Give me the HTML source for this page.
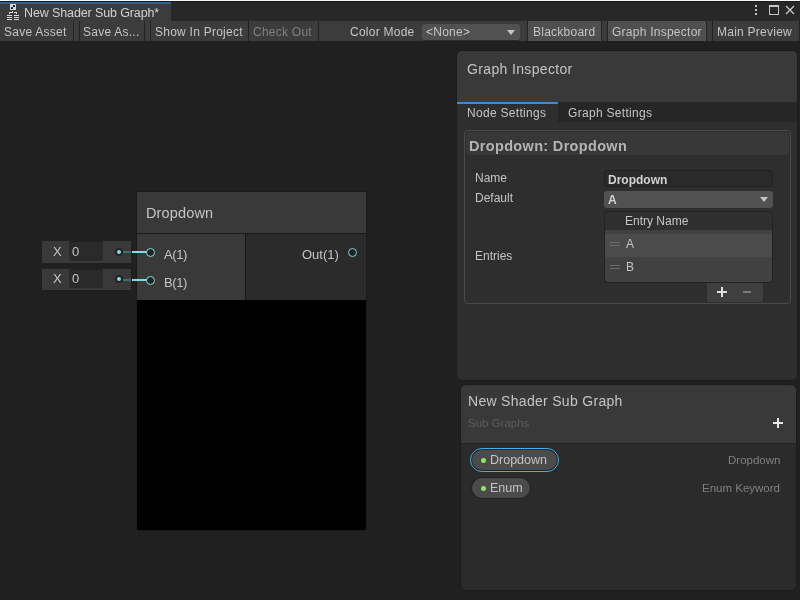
<!DOCTYPE html>
<html><head><meta charset="utf-8">
<style>
*{margin:0;padding:0;box-sizing:border-box}
html,body{width:800px;height:600px;overflow:hidden;background:#202020;font-family:"Liberation Sans",sans-serif;color:#c4c4c4}
.a{position:absolute}
.t{position:absolute;white-space:nowrap;font-size:12px;line-height:14px;will-change:transform}
.tb{letter-spacing:0.25px}
</style></head><body>
<!-- top strip -->
<div class="a" style="left:0;top:0;width:800px;height:1px;background:#f5f5f5"></div>
<div class="a" style="left:0;top:1px;width:800px;height:20px;background:#282828"></div>
<div class="a" style="left:0;top:1px;width:800px;height:1px;background:#1a1a1a"></div>
<!-- tab -->
<div class="a" style="left:0;top:2px;width:171px;height:19px;background:#3c3c3c"></div>
<div class="a" style="left:0;top:2px;width:171px;height:2px;background:#2c629c"></div>
<div class="t" style="left:24px;top:6px;font-size:12.5px;letter-spacing:-0.12px;color:#d2d2d2">New Shader Sub Graph*</div>
<!-- toolbar -->
<div class="a" style="left:0;top:21px;width:800px;height:20px;background:#3c3c3c"></div>
<div class="a" style="left:144px;top:21px;width:1px;height:20px;background:#232323"></div>
<div class="a" style="left:150px;top:21px;width:1px;height:20px;background:#232323"></div>
<div class="a" style="left:73px;top:21px;width:1px;height:20px;background:#232323"></div>
<div class="a" style="left:79px;top:21px;width:1px;height:20px;background:#232323"></div>
<div class="a" style="left:248px;top:21px;width:1px;height:20px;background:#232323"></div>
<div class="a" style="left:318px;top:21px;width:1px;height:20px;background:#232323"></div>
<div class="t tb" style="left:4px;top:25px">Save Asset</div>
<div class="t tb" style="left:83px;top:25px">Save As...</div>
<div class="t tb" style="left:155px;top:25px">Show In Project</div>
<div class="t tb" style="left:253px;top:25px;color:#7f7f7f">Check Out</div>
<div class="t tb" style="left:350px;top:25px">Color Mode</div>
<div class="a" style="left:422px;top:24px;width:98px;height:17px;background:#515151;border-radius:3px;border-bottom:1px solid #2c2c2c"></div>
<div class="t tb" style="left:426px;top:25px">&lt;None&gt;</div>
<div class="a" style="left:507px;top:30px;width:0;height:0;border-left:4px solid transparent;border-right:4px solid transparent;border-top:5px solid #c4c4c4"></div>
<div class="a" style="left:527px;top:21px;width:1px;height:20px;background:#232323"></div>
<div class="a" style="left:528px;top:21px;width:73px;height:20px;background:#4f4f4f"></div>
<div class="a" style="left:601px;top:21px;width:1px;height:20px;background:#232323"></div>
<div class="a" style="left:607px;top:21px;width:1px;height:20px;background:#232323"></div>
<div class="a" style="left:608px;top:21px;width:98px;height:20px;background:#4f4f4f"></div>
<div class="a" style="left:706px;top:21px;width:1px;height:20px;background:#232323"></div>
<div class="a" style="left:712px;top:21px;width:1px;height:20px;background:#232323"></div>
<div class="a" style="left:799px;top:21px;width:1px;height:20px;background:#232323"></div>
<div class="t tb" style="left:533px;top:25px">Blackboard</div>
<div class="t tb" style="left:612px;top:25px">Graph Inspector</div>
<div class="t tb" style="left:717px;top:25px">Main Preview</div>
<!-- window icons -->
<div class="a" style="left:755px;top:5px;width:2px;height:2px;background:#c4c4c4"></div>
<div class="a" style="left:755px;top:9px;width:2px;height:2px;background:#c4c4c4"></div>
<div class="a" style="left:755px;top:13px;width:2px;height:2px;background:#c4c4c4"></div>
<div class="a" style="left:769px;top:5px;width:10px;height:10px;border:1px solid #c4c4c4;border-top-width:2px"></div>
<svg class="a" style="left:785px;top:5px" width="10" height="10"><path d="M1 1L9 9M9 1L1 9" stroke="#c4c4c4" stroke-width="1.4"/></svg>

<!-- node -->
<div class="a" style="left:136px;top:191px;width:231px;height:340px;background:#1a1a1a;border-radius:3px"></div>
<div class="a" style="left:137px;top:192px;width:229px;height:41px;background:#393939"></div>
<div class="t" style="left:146px;top:206px;font-size:14.5px;letter-spacing:0.15px">Dropdown</div>
<div class="a" style="left:137px;top:234px;width:108px;height:66px;background:#393939"></div>
<div class="a" style="left:246px;top:234px;width:120px;height:66px;background:#2b2b2b"></div>
<div class="a" style="left:137px;top:300px;width:229px;height:230px;background:#000;border-radius:0 0 2px 2px"></div>
<div class="t" style="left:164px;top:248px;font-size:13px;letter-spacing:-0.4px">A(1)</div>
<div class="t" style="left:164px;top:276px;font-size:13px;letter-spacing:-0.4px">B(1)</div>
<div class="t" style="left:302px;top:248px;font-size:13px">Out(1)</div>
<div class="a" style="left:348px;top:248px;width:9px;height:9px;border:1.6px solid #74d6de;border-radius:50%;background:#222"></div>
<!-- inputs -->
<div class="a" style="left:42px;top:241px;width:89px;height:22px;background:#393939"></div>
<div class="a" style="left:42px;top:269px;width:89px;height:21px;background:#393939"></div>
<div class="a" style="left:69px;top:241px;width:34px;height:20px;background:#2a2a2a;border-radius:3px;border-top:1px solid #1f1f1f"></div>
<div class="a" style="left:69px;top:269px;width:34px;height:19px;background:#2a2a2a;border-radius:3px;border-top:1px solid #1f1f1f"></div>
<div class="t" style="left:53px;top:245px;font-size:13px">X</div>
<div class="t" style="left:72px;top:245px;font-size:13px">0</div>
<div class="t" style="left:53px;top:272px;font-size:13px">X</div>
<div class="t" style="left:72px;top:272px;font-size:13px">0</div>
<div class="a" style="left:115px;top:248px;width:8px;height:8px;border-radius:50%;background:#232323"></div>
<div class="a" style="left:117px;top:250px;width:4px;height:4px;border-radius:50%;background:#7fdbe4"></div>
<div class="a" style="left:115px;top:275px;width:8px;height:8px;border-radius:50%;background:#232323"></div>
<div class="a" style="left:117px;top:277px;width:4px;height:4px;border-radius:50%;background:#7fdbe4"></div>
<div class="a" style="left:123px;top:251px;width:8px;height:2px;background:#3f6d70"></div>
<div class="a" style="left:123px;top:279px;width:8px;height:2px;background:#3f6d70"></div>
<div class="a" style="left:132px;top:251px;width:15px;height:2px;background:#7fdbe4"></div>
<div class="a" style="left:132px;top:279px;width:15px;height:2px;background:#7fdbe4"></div>
<div class="a" style="left:146px;top:248px;width:9px;height:9px;border:1.5px solid #7fdbe4;border-radius:50%;background:#232323"></div>
<div class="a" style="left:146px;top:276px;width:9px;height:9px;border:1.5px solid #7fdbe4;border-radius:50%;background:#232323"></div>

<!-- inspector -->
<div class="a" style="left:456px;top:50px;width:342px;height:331px;background:#1c1c1c;border-radius:6px"></div>
<div class="a" style="left:457px;top:51px;width:340px;height:329px;background:#2e2e2e;border-radius:5px;overflow:hidden">
  <div class="a" style="left:0;top:0;width:340px;height:51px;background:#393939"></div>
  <div class="t" style="left:10px;top:11px;font-size:14px;letter-spacing:0.35px">Graph Inspector</div>
  <div class="a" style="left:0;top:51px;width:340px;height:20px;background:#262626"></div>
  <div class="a" style="left:0;top:51px;width:101px;height:20px;background:#2e2e2e"></div>
  <div class="a" style="left:0;top:51px;width:101px;height:2px;background:#3a8ad8"></div>
  <div class="t" style="left:10px;top:55px;letter-spacing:0.3px">Node Settings</div>
  <div class="t" style="left:111px;top:55px;letter-spacing:0.3px">Graph Settings</div>
</div>
<!-- section box -->
<div class="a" style="left:464px;top:130px;width:327px;height:174px;border:1px solid #4a4a4a;border-radius:4px;background:#2e2e2e"></div>
<div class="a" style="left:466px;top:132px;width:323px;height:23px;background:#383838;border-radius:3px"></div>
<div class="t" style="left:469px;top:139px;font-size:14.5px;font-weight:bold;color:#b4b4b4;letter-spacing:0.33px">Dropdown: Dropdown</div>
<div class="t" style="left:475px;top:171px">Name</div>
<div class="t" style="left:475px;top:191px">Default</div>
<div class="t" style="left:475px;top:249px">Entries</div>
<div class="a" style="left:604px;top:170px;width:169px;height:17px;background:#2a2a2a;border:1px solid #212121;border-radius:3px"></div>
<div class="t" style="left:608px;top:173px;font-weight:bold;color:#d2d2d2">Dropdown</div>
<div class="a" style="left:604px;top:191px;width:169px;height:17px;background:#515151;border-radius:3px"></div>
<div class="t" style="left:608px;top:193px;font-weight:bold;color:#d2d2d2">A</div>
<div class="a" style="left:760px;top:197px;width:0;height:0;border-left:4px solid transparent;border-right:4px solid transparent;border-top:5px solid #c4c4c4"></div>
<!-- entries list -->
<div class="a" style="left:604px;top:211px;width:169px;height:72px;background:#232323;border-radius:3px"></div>
<div class="a" style="left:605px;top:212px;width:167px;height:18px;background:#2f2f2f"></div>
<div class="a" style="left:605px;top:230px;width:167px;height:52px;background:#414141;border-radius:0 0 3px 3px"></div>
<div class="a" style="left:605px;top:234px;width:167px;height:23px;background:#4b4b4b"></div>
<div class="t" style="left:625px;top:214px">Entry Name</div>
<div class="t" style="left:626px;top:237px">A</div>
<div class="t" style="left:626px;top:260px">B</div>
<div class="a" style="left:610px;top:242px;width:10px;height:1px;background:#6a6a6a"></div>
<div class="a" style="left:610px;top:245px;width:10px;height:1px;background:#6a6a6a"></div>
<div class="a" style="left:610px;top:265px;width:10px;height:1px;background:#6a6a6a"></div>
<div class="a" style="left:610px;top:268px;width:10px;height:1px;background:#6a6a6a"></div>
<div class="a" style="left:707px;top:283px;width:56px;height:19px;background:#3f3f3f;border-radius:0 0 3px 3px"></div>
<div class="a" style="left:717px;top:291px;width:10px;height:2px;background:#e0e0e0"></div>
<div class="a" style="left:721px;top:287px;width:2px;height:10px;background:#e0e0e0"></div>
<div class="a" style="left:743px;top:291px;width:8px;height:2px;background:#7a7a7a"></div>

<!-- blackboard -->
<div class="a" style="left:460px;top:384px;width:337px;height:207px;background:#1c1c1c;border-radius:6px"></div>
<div class="a" style="left:461px;top:385px;width:335px;height:205px;background:#2b2b2b;border-radius:5px;overflow:hidden">
  <div class="a" style="left:0;top:0;width:335px;height:58px;background:#393939"></div>
  <div class="a" style="left:0;top:58px;width:335px;height:1px;background:#232323"></div>
  <div class="t" style="left:7px;top:9px;font-size:14px;letter-spacing:0.3px">New Shader Sub Graph</div>
  <div class="t" style="left:7px;top:31px;font-size:11.5px;color:#5c5c5c">Sub Graphs</div>
  <div class="a" style="left:312px;top:37px;width:10px;height:2px;background:#e8e8e8"></div>
  <div class="a" style="left:316px;top:33px;width:2px;height:10px;background:#e8e8e8"></div>
  <div class="t" style="right:16px;top:68px;font-size:11.5px;color:#808080">Dropdown</div>
  <div class="t" style="right:16px;top:96px;font-size:11.5px;color:#808080">Enum Keyword</div>
</div>
<div class="a" style="left:470px;top:448px;width:89px;height:24px;border:1.6px solid #42b0ee;border-radius:12px;background:#232323"></div>
<div class="a" style="left:472px;top:450px;width:85px;height:20px;border-radius:10px;background:#4b4b4b"></div>
<div class="a" style="left:481px;top:458px;width:5px;height:5px;border-radius:50%;background:#8ee465"></div>
<div class="t" style="left:490px;top:453px;font-size:12.5px">Dropdown</div>
<div class="a" style="left:472px;top:478px;width:58px;height:20px;border-radius:10px;background:#4b4b4b;box-shadow:0 0 0 1px #232323"></div>
<div class="a" style="left:481px;top:486px;width:5px;height:5px;border-radius:50%;background:#8ee465"></div>
<div class="t" style="left:490px;top:481px;font-size:12.5px">Enum</div>

<!-- tab icon -->
<svg class="a" style="left:6px;top:4px" width="14" height="17" viewBox="0 0 14 17">
<rect x="4" y="0" width="6" height="6" fill="#d8d8d8"/>
<rect x="5" y="3" width="2" height="2" rx="0.6" fill="#111"/>
<rect x="7" y="1" width="2" height="2" rx="0.6" fill="#111"/>
<rect x="3" y="8" width="4" height="1" fill="#d8d8d8"/><rect x="3" y="8" width="1" height="2" fill="#d8d8d8"/><rect x="6" y="7" width="1" height="2" fill="#d8d8d8"/><rect x="8" y="8" width="3" height="1" fill="#d8d8d8"/><rect x="10" y="8" width="1" height="2" fill="#d8d8d8"/>
<rect x="1" y="11" width="5" height="1" fill="#d8d8d8"/>
<rect x="8" y="11" width="5" height="1" fill="#d8d8d8"/>
<rect x="1" y="13" width="5" height="1" fill="#d8d8d8"/>
<rect x="8" y="13" width="5" height="1" fill="#d8d8d8"/>
<rect x="1" y="15" width="5" height="1" fill="#d8d8d8"/>
<rect x="8" y="15" width="5" height="1" fill="#d8d8d8"/>
</svg>
</body></html>
